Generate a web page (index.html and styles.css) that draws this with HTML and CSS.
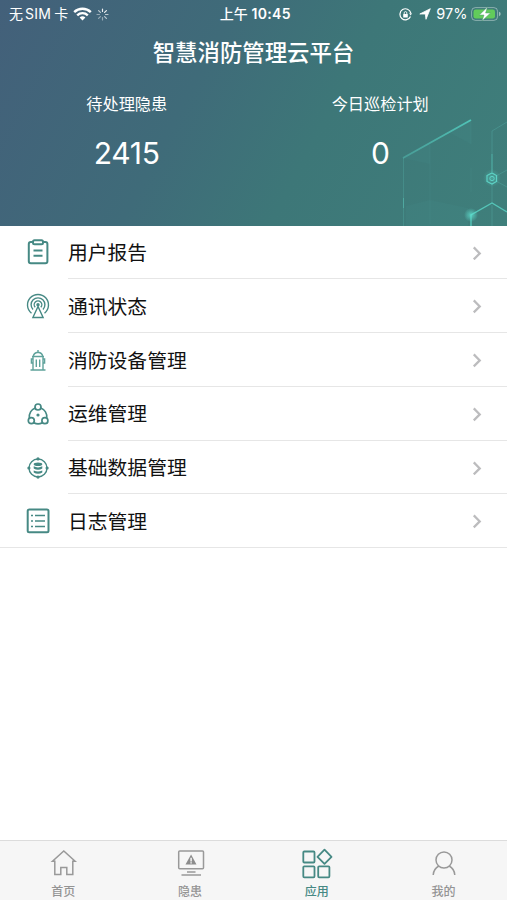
FILE: index.html
```html
<!DOCTYPE html>
<html lang="zh-CN">
<head>
    <meta charset="UTF-8">
    <meta name="viewport" content="width=device-width, initial-scale=1.0">
    <title>智慧消防管理云平台</title>
    <link rel="stylesheet" href="styles.css">
</head>
<body>
    <header class="header">
        <svg class="header-art" viewBox="0 0 127 130" fill="none">
            <defs>
                <linearGradient id="beam" x1="0" y1="1" x2="1" y2="0">
                    <stop offset="0" stop-color="#4fb3aa" stop-opacity=".6"/>
                    <stop offset="1" stop-color="#50c4b8"/>
                </linearGradient>
                <radialGradient id="glow">
                    <stop offset="0" stop-color="#5fe0d0" stop-opacity=".8"/>
                    <stop offset="1" stop-color="#5fe0d0" stop-opacity="0"/>
                </radialGradient>
            </defs>
            <path d="M23 58 50 42V64ZM50 42 91 20V44L70 33ZM26 106 50 100 88 108V126H26Z" fill="#5cb0a8" opacity=".07"/>
            <path d="M50 45V124M91 68V92M91 22V44" stroke="#55a9a2" opacity=".15"/>
            <path d="M23.500 58V126" stroke="#4fa8a0" opacity=".4"/>
            <path d="M23.500 98V108" stroke="#59c4b8" opacity=".5"/>
            <path d="M23 58 91 20" stroke="url(#beam)" stroke-width="1.800"/>
            <path d="M112 72V31L127 22M112 84V103M116 76 127 70M116 81 127 87" stroke="#55b5ac" opacity=".35"/>
            <path d="M112 54V72" stroke="#55c5b8" opacity=".6"/>
            <path d="M91 126V115L112 103 127 112" stroke="#55c5b8" stroke-width="1.400"/>
            <path d="M112 105V126" stroke="#55b5ac" opacity=".35"/>
            <circle cx="112" cy="78" r="9" fill="url(#glow)" opacity=".5"/>
            <circle cx="91" cy="115" r="7" fill="url(#glow)"/>
            <path d="M112 73 116.500 75.500V81.500L112 84 107 81.500V75.500Z" stroke="#5dd3c6" stroke-width="1.200"/>
            <circle cx="112" cy="78.500" r="2.200" stroke="#5dd3c6"/>
        </svg>
        <div class="status-bar">
            <div class="status-left">
                <span class="carrier">无<span class="sim">SIM</span>卡</span>
                <svg class="wifi" width="19" height="14" viewBox="0 0 19 14" fill="none" stroke="#fff" stroke-width="2.400">
                    <path d="M1.200 5.200a11.800 11.800 0 0 1 16.600 0M4.200 8.300a7.600 7.600 0 0 1 10.600 0"/>
                    <path d="M9.500 13.500 6.600 10.600a4.200 4.200 0 0 1 5.800 0Z" fill="#fff" stroke="none"/>
                </svg>
                <svg class="spinner" width="13" height="13" viewBox="-6.500 -6.500 13 13" stroke="#fff" stroke-width="1.200" stroke-linecap="round">
                    <path d="M0-3V-5.500M2.100-2.100 3.900-3.900" opacity=".9"/>
                    <path d="M3 0H5.500M2.100 2.100 3.900 3.900M-2.100-2.100-3.900-3.900" opacity=".65"/>
                    <path d="M0 3V5.500M-2.100 2.100-3.900 3.900M-3 0H-5.500" opacity=".45"/>
                </svg>
            </div>
            <div class="status-time">上午 <b>10:45</b></div>
            <div class="status-right">
                <svg width="13" height="13" viewBox="0 0 13 13" fill="none" stroke="#fff" stroke-width="1.200">
                    <path d="M11.800 5A5.500 5.500 0 1 0 11.500 8.500"/>
                    <path d="M10.200 5.200H13L11.700 7.400Z" fill="#fff" stroke="none"/>
                    <rect x="4.200" y="6" width="4.600" height="3.500" rx=".5" fill="#fff" stroke="none"/>
                    <path d="M5.200 6V4.900a1.300 1.300 0 0 1 2.600 0V6" stroke-width=".9"/>
                </svg>
                <svg class="arrow" width="12" height="12" viewBox="0 0 12 12" fill="#fff" stroke="#fff" stroke-width=".8" stroke-linejoin="round">
                    <path d="M11.300.700 7 11.300 6.300 6H.800Z"/>
                </svg>
                <span class="percent">97%</span>
                <svg class="battery" width="31" height="16" viewBox="0 0 31 16">
                    <rect x=".6" y="1.600" width="26" height="12.800" rx="3.800" fill="none" stroke="#fff" stroke-opacity=".4"/>
                    <rect x="2.500" y="3.500" width="21.500" height="9" rx="2.200" fill="#62cb5b"/>
                    <path d="M28 5.800v4.400q1.700-.6 1.700-2.200T28 5.800Z" fill="#fff" opacity=".5"/>
                    <path d="M16.500 1 8.300 9H13L11 15 19.500 7H14.600Z" fill="#fff" stroke="#4c9a72" stroke-width=".5"/>
                </svg>
            </div>
        </div>
        <h1 class="title">智慧消防管理云平台</h1>
        <div class="stats">
            <div class="stat">
                <div class="stat-label">待处理隐患</div>
                <div class="stat-value">2415</div>
            </div>
            <div class="stat">
                <div class="stat-label">今日巡检计划</div>
                <div class="stat-value">0</div>
            </div>
        </div>
    </header>

    <main class="menu">
        <a class="menu-item">
            <svg class="menu-icon" viewBox="0 0 28 28">
                <rect x="4.800" y="4" width="18.600" height="21.300" rx="2"/>
                <rect x="9" y="2.200" width="10" height="4" rx="1.500" fill="#fff"/>
                <path d="M9.500 12.500h9M9.500 17.800h9"/>
            </svg>
            <span class="menu-text">用户报告</span>
            <svg class="chevron" viewBox="0 0 10 16"><path d="m1.500 1.500 6.500 6.500-6.500 6.500"/></svg>
        </a>
        <a class="menu-item">
            <svg class="menu-icon thin" viewBox="0 0 28 28">
                <path d="M7.500 21.200a10.500 10.500 0 1 1 13 0"/>
                <path d="M9 17.500a6.900 6.900 0 1 1 10 0"/>
                <path d="M11.200 15.300a3.800 3.800 0 1 1 5.600 0"/>
                <circle cx="14" cy="12.800" r="1.700" class="solid"/>
                <path d="M14 14.500 8.900 25.500H19.100Z" fill="#fff"/>
            </svg>
            <span class="menu-text">通讯状态</span>
            <svg class="chevron" viewBox="0 0 10 16"><path d="m1.500 1.500 6.500 6.500-6.500 6.500"/></svg>
        </a>
        <a class="menu-item">
            <svg class="menu-icon thin light" viewBox="0 0 28 28">
                <path d="M6.500 24h15M9 24V10.500h10V24M8 10.500h12M9.300 10.500C9.500 7.500 11.500 6.500 14 6.200 16.500 6.500 18.500 7.500 18.700 10.500M14 6V4"/>
                <path d="M9 13H7.400v4H9M19 13h1.600v4H19M12.300 13.500v7.500M15.700 13.500v7.500"/>
            </svg>
            <span class="menu-text">消防设备管理</span>
            <svg class="chevron" viewBox="0 0 10 16"><path d="m1.500 1.500 6.500 6.500-6.500 6.500"/></svg>
        </a>
        <a class="menu-item">
            <svg class="menu-icon mid" viewBox="0 0 28 28">
                <circle cx="14" cy="7" r="3"/>
                <circle cx="7.300" cy="20.700" r="3"/>
                <circle cx="20.900" cy="20.700" r="3"/>
                <path d="M11.200 8A9.600 9.600 0 0 0 5.400 18M16.800 8A9.600 9.600 0 0 1 22.700 18M10 22.900A10 10 0 0 0 18.200 22.900"/>
                <circle cx="14" cy="15" r="1.600" class="solid"/>
            </svg>
            <span class="menu-text">运维管理</span>
            <svg class="chevron" viewBox="0 0 10 16"><path d="m1.500 1.500 6.500 6.500-6.500 6.500"/></svg>
        </a>
        <a class="menu-item">
            <svg class="menu-icon thin" viewBox="0 0 28 28">
                <circle cx="14" cy="14" r="9"/>
                <g class="solid">
                    <circle cx="14" cy="4.900" r="1.600"/>
                    <circle cx="14" cy="23.100" r="1.600"/>
                    <circle cx="4.900" cy="14" r="1.600"/>
                    <circle cx="23.100" cy="14" r="1.600"/>
                    <ellipse cx="14" cy="10.200" rx="4.300" ry="1.800"/>
                    <path d="M9.700 12.300q4.300 2.200 8.600 0v2.300q-4.300 2.400-8.600 0Z"/>
                    <path d="M9.700 16.400q4.300 2.200 8.600 0v2q-4.300 2.600-8.600 0Z"/>
                </g>
            </svg>
            <span class="menu-text">基础数据管理</span>
            <svg class="chevron" viewBox="0 0 10 16"><path d="m1.500 1.500 6.500 6.500-6.500 6.500"/></svg>
        </a>
        <a class="menu-item">
            <svg class="menu-icon" viewBox="0 0 28 28">
                <rect x="3.700" y="2.500" width="20.800" height="22.700" rx="1.500"/>
                <path d="M11 8.500h10M11 14h10M11 19.500h10M7 8.500h2M7 14h2M7 19.500h2" stroke-width="1.500"/>
            </svg>
            <span class="menu-text">日志管理</span>
            <svg class="chevron" viewBox="0 0 10 16"><path d="m1.500 1.500 6.500 6.500-6.500 6.500"/></svg>
        </a>
    </main>

    <nav class="tabbar">
        <a class="tab">
            <svg class="tab-icon" viewBox="0 0 32 32">
                <path d="M7.800 16.300H5.500L16.800 6 28.100 16.300H25.800V29.500H19.800V22.500H13.800V29.500H7.800Z"/>
            </svg>
            <span>首页</span>
        </a>
        <a class="tab">
            <svg class="tab-icon" viewBox="0 0 32 32">
                <rect x="4.700" y="6" width="24.800" height="17.700" rx="1"/>
                <path d="M13 27h8.500M7.500 30h19.500"/>
                <path d="M17.100 9.500 22.500 19.500H11.500Z" class="fill"/>
                <path d="M17.100 12.800v3.700M17.100 17.300v1.200" stroke="#f6f6f6"/>
            </svg>
            <span>隐患</span>
        </a>
        <a class="tab active">
            <svg class="tab-icon" viewBox="0 0 32 32">
                <rect x="2.300" y="6.500" width="11.200" height="11" rx="1"/>
                <rect x="2.300" y="21.300" width="11.200" height="11" rx="1"/>
                <rect x="17.200" y="21.300" width="11.200" height="11" rx="1"/>
                <path d="M23.500 4.700 30.500 11.800 23.500 18.900 16.500 11.800Z" stroke-linejoin="round"/>
            </svg>
            <span>应用</span>
        </a>
        <a class="tab">
            <svg class="tab-icon" viewBox="0 0 32 32">
                <circle cx="16" cy="15" r="8"/>
                <path d="M5.200 30C5.500 25.500 7.500 22.800 10.900 21M26.800 30C26.500 25.500 24.500 22.800 21.100 21"/>
            </svg>
            <span>我的</span>
        </a>
    </nav>
</body>
</html>
```
FILE: styles.css
```css
* {
    box-sizing: border-box;
}
body {
    display: flex;
    flex-direction: column;
    height: 900px;
    margin: 0;
    background: #fff;
    font-family: Inter, "Noto Sans CJK SC", sans-serif;
    color: #111;
}
.header {
    position: relative;
    height: 225.5px;
    background: linear-gradient(118deg, #43607a 0%, #3f6b79 38%, #3d7778 62%, #3f7f7b 100%);
    color: #fff;
    overflow: hidden;
}
.header-art {
    position: absolute;
    right: 0;
    top: 100px;
    width: 127px;
    height: 130px;
}
.status-bar {
    display: grid;
    grid-template-columns: 1fr auto 1fr;
    align-items: center;
    height: 28px;
    padding: 0 5.5px 0 9px;
    font-size: 14.5px;
    line-height: 28px;
}
.status-left, .status-right {
    display: flex;
    align-items: center;
}
.status-right {
    justify-content: flex-end;
}
.carrier {
    font-size: 14px;
    white-space: nowrap;
}
.sim {
    margin: 0 3px 0 2px;
    letter-spacing: 0.3px;
}
.wifi {
    margin-left: 5px;
}
.spinner {
    margin-left: 4px;
}
.status-time {
    font-size: 14px;
    font-weight: 500;
}
.status-time b {
    font-weight: 600;
    letter-spacing: 0.3px;
}
.arrow {
    margin: 0 5px 0 7px;
}
.percent {
    font-size: 14.5px;
    margin-right: 3px;
}
.title {
    margin: 0;
    padding-top: 9px;
    font-size: 22.4px;
    line-height: 32px;
    font-weight: 500;
    text-align: center;
}
.stats {
    display: grid;
    grid-template-columns: 1fr 1fr;
    padding-top: 23px;
    text-align: center;
}
.stat-label {
    font-size: 16.2px;
    line-height: 24px;
}
.stat-value {
    padding-top: 17px;
    font-size: 30px;
    line-height: 40px;
    font-weight: 400;
    letter-spacing: -0.3px;
}
.menu {
    flex: 1;
}
.menu-item {
    display: flex;
    align-items: center;
    height: 53.8px;
    padding-left: 23.5px;
}
.menu-icon {
    width: 28px;
    height: 28px;
    margin-right: 16.5px;
    fill: none;
    stroke: #468984;
    stroke-width: 2;
}
.menu-icon.mid {
    stroke-width: 1.7;
}
.menu-icon.thin {
    stroke-width: 1.4;
}
.menu-icon.light {
    stroke: #5fa29b;
}
.menu-icon .solid {
    fill: #468984;
    stroke: none;
}
.menu-text {
    flex: 1;
    height: 100%;
    padding-top: 1.5px;
    font-size: 19.8px;
    line-height: 53px;
    border-bottom: 1px solid #e6e6e6;
}
.chevron {
    align-self: stretch;
    width: 37px;
    height: 100%;
    padding: 20px 25px 18px 2px;
    fill: none;
    stroke: #bcbcbe;
    stroke-width: 2.4;
    border-bottom: 1px solid #e6e6e6;
}
.menu-item:last-child {
    border-bottom: 1px solid #e6e6e6;
}
.menu-item:last-child .menu-text,
.menu-item:last-child .chevron {
    border-bottom: none;
}
.tabbar {
    display: grid;
    grid-template-columns: repeat(4, 1fr);
    height: 60px;
    background: #f6f6f6;
    border-top: 1px solid #dcdcdc;
}
.tab {
    display: flex;
    flex-direction: column;
    align-items: center;
    padding-top: 4px;
    font-size: 12px;
    line-height: 16px;
    font-weight: 500;
    color: #949494;
}
.tab-icon {
    width: 32px;
    height: 32px;
    margin-bottom: 6.5px;
    fill: none;
    stroke: #999;
    stroke-width: 1.5;
    overflow: visible;
}
.tab-icon .fill {
    fill: #8c8c8c;
    stroke: none;
}
.tab.active {
    color: #468984;
}
.active .tab-icon {
    stroke: #468984;
    stroke-width: 1.8;
}
```
